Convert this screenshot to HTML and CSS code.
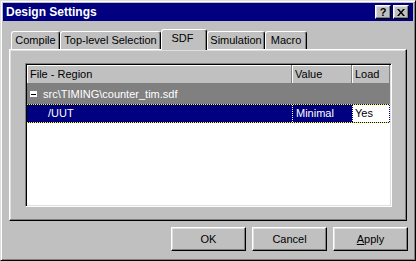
FILE: index.html
```html
<!DOCTYPE html>
<html>
<head>
<meta charset="utf-8">
<link rel="stylesheet" href="styles.css">
</head>
<body>
<div class="window">
  <div class="titlebar">
    <span class="title">Design Settings</span>
    <div class="tb-buttons">
      <span class="tb-btn help">?</span>
      <span class="tb-btn close"><svg width="8" height="7" viewBox="0 0 8 7"><path d="M0 0h2l2 2.5L6 0h2L5 3.5 8 7H6L4 4.5 2 7H0l3-3.5z" fill="#000"/></svg></span>
    </div>
  </div>
  <div class="client">
    <div class="tabs">
      <div class="tab t-compile">Compile</div>
      <div class="tab t-top">Top-level Selection</div>
      <div class="tab t-sdf active">SDF</div>
      <div class="tab t-sim">Simulation</div>
      <div class="tab t-macro">Macro</div>
    </div>
    <div class="panel">
      <div class="list">
        <div class="lv-header">
          <div class="hcell c1">File - Region</div>
          <div class="hcell c2">Value</div>
          <div class="hcell c3">Load</div>
        </div>
        <div class="row group">
          <div class="cell c1"><span class="minus"><span class="minus-bar"></span></span><span class="gtext">src\TIMING\counter_tim.sdf</span></div>
        </div>
        <div class="row sel">
          <div class="cell c1 indent">/UUT</div>
          <div class="cell c2 val">Minimal</div>
          <div class="cell c3 load">Yes</div>
        </div>
      </div>
    </div>
    <div class="buttons">
      <div class="btn">OK</div>
      <div class="btn">Cancel</div>
      <div class="btn"><u>A</u>pply</div>
    </div>
  </div>
</div>
</body>
</html>
```
FILE: styles.css
```css
body {
  margin: 0;
}

.window {
  width: 416px;
  height: 261px;
  box-sizing: border-box;
  background: #c0c0c0;
  border: 1px solid;
  border-color: #dfdfdf #000 #000 #dfdfdf;
  box-shadow: inset 1px 1px #fff, inset -1px -1px #808080;
  padding: 2px;
  font-family: "Liberation Sans", Arial, sans-serif;
  font-size: 11px;
  color: #000;
  display: flex;
  flex-direction: column;
}

.titlebar {
  height: 18px;
  flex: none;
  background: #000080;
  display: flex;
  align-items: center;
  justify-content: space-between;
  padding: 0 4px 0 3px;
  color: #fff;
  font-weight: bold;
  font-size: 12px;
}

.tb-buttons {
  display: flex;
}

.tb-btn {
  width: 16px;
  height: 14px;
  box-sizing: border-box;
  background: #c0c0c0;
  border: 1px solid;
  border-color: #fff #000 #000 #fff;
  box-shadow: inset -1px -1px #808080, inset 1px 1px #dfdfdf;
  display: flex;
  align-items: center;
  justify-content: center;
  color: #000;
  font-size: 11px;
  font-weight: bold;
  line-height: 1;
}

.close {
  margin-left: 2px;
}

.client {
  flex: 1;
  padding-top: 8px;
  display: flex;
  flex-direction: column;
}

.tabs {
  display: flex;
  align-items: flex-end;
  height: 20px;
  margin-left: 8px;
}

.tab {
  height: 18px;
  box-sizing: border-box;
  border-top: 1px solid #fff;
  border-left: 1px solid #fff;
  border-right: 1px solid #000;
  box-shadow: inset -1px 0 #808080;
  border-radius: 3px 3px 0 0;
  text-align: center;
  line-height: 17px;
  white-space: nowrap;
}

.t-compile { width: 49px; }
.t-top { width: 101px; }
.t-sdf { width: 46px; }
.t-sim { width: 58px; }
.t-macro { width: 42px; }

.tab.active {
  height: 21px;
  margin-bottom: -1px;
  position: relative;
  z-index: 1;
  background: #c0c0c0;
  line-height: 17px;
  padding-right: 3px;
}

.panel {
  margin-left: 6px;
  width: 398px;
  height: 172px;
  box-sizing: border-box;
  border: 1px solid;
  border-color: #fff #000 #000 #fff;
  box-shadow: inset -1px -1px #808080, inset 1px 1px #dfdfdf;
  padding: 13px 0 0 15px;
}

.list {
  width: 367px;
  height: 144px;
  box-sizing: border-box;
  background: #fff;
  border: 1px solid;
  border-color: #808080 #fff #fff #808080;
  box-shadow: inset 1px 1px #000, inset -1px -1px #dfdfdf;
  padding: 1px;
}

.lv-header {
  display: flex;
  height: 19px;
}

.hcell {
  box-sizing: border-box;
  background: #c0c0c0;
  border-right: 1px solid #808080;
  border-bottom: 1px solid #808080;
  box-shadow: inset 1px 1px #fff;
  padding-left: 3px;
  line-height: 18px;
}

.c1 { width: 265px; }
.c2 { width: 60px; }
.c3 { width: 38px; }

.row {
  display: flex;
  color: #fff;
}

.cell {
  box-sizing: border-box;
  white-space: nowrap;
}

.group {
  height: 20px;
  background: #808080;
}

.group .c1 {
  display: flex;
  align-items: center;
  padding-left: 3px;
  width: 363px;
}

.minus {
  width: 7px;
  height: 6px;
  background: #fff;
  display: flex;
  align-items: center;
  justify-content: center;
  margin-right: 6px;
}

.minus-bar {
  width: 5px;
  height: 1px;
  background: #000;
}

.sel {
  height: 19px;
  background: #000080;
  border-top: 1px dotted #ffff00;
  border-bottom: 1px dotted #ffff00;
  box-sizing: border-box;
  line-height: 17px;
}

.indent {
  padding-left: 21px;
}

.val {
  padding-left: 3px;
  border-left: 1px dotted #fff;
}

.load {
  padding-left: 2px;
  background: #fff;
  color: #000;
  border-left: 1px dotted #000080;
  border-right: 1px dotted #000080;
}

.buttons {
  display: flex;
  justify-content: flex-end;
  gap: 6px;
  margin-top: 6px;
  padding-right: 5px;
}

.btn {
  width: 75px;
  height: 24px;
  box-sizing: border-box;
  border: 1px solid;
  border-color: #fff #000 #000 #fff;
  box-shadow: inset -1px -1px #808080, inset 1px 1px #dfdfdf;
  display: flex;
  align-items: center;
  justify-content: center;
}
```
